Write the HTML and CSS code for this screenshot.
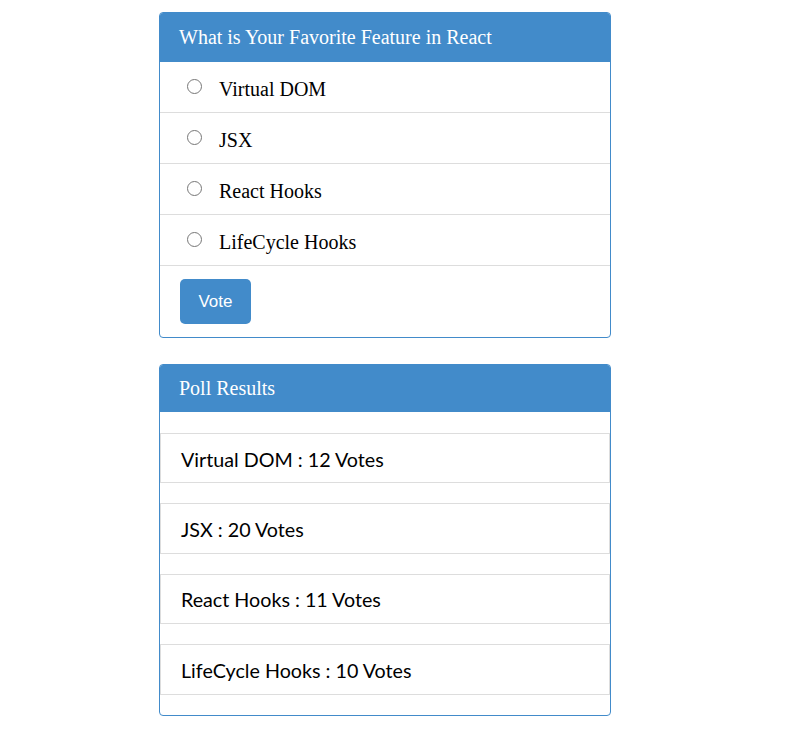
FILE: index.html
```html
<!DOCTYPE html>
<html>
<head>
<meta charset="utf-8">
<link rel="stylesheet" href="styles.css">
</head>
<body>
<div class="page">
  <div class="card">
    <div class="card-header">What is Your Favorite Feature in React</div>
    <label class="option"><input type="radio" name="f"><span>Virtual DOM</span></label>
    <label class="option"><input type="radio" name="f"><span>JSX</span></label>
    <label class="option"><input type="radio" name="f"><span>React Hooks</span></label>
    <label class="option"><input type="radio" name="f"><span>LifeCycle Hooks</span></label>
    <div class="card-footer"><button class="vote">Vote</button></div>
  </div>
  <div class="card results">
    <div class="card-header header-sm">Poll Results</div>
    <div class="result-list">
      <div class="result">Virtual DOM : 12 Votes</div>
      <div class="result">JSX : 20 Votes</div>
      <div class="result">React Hooks : 11 Votes</div>
      <div class="result">LifeCycle Hooks : 10 Votes</div>
    </div>
  </div>
</div>
</body>
</html>
```

FILE: styles.css
```css
html, body { margin: 0; padding: 0; background: #fff; }
.page {
  padding: 12px 0 0 159px;
  display: flex;
  flex-direction: column;
  gap: 26px;
}
.card {
  width: 450px;
  border: 1px solid #428bca;
  border-radius: 4px;
  overflow: hidden;
  background: #fff;
}
.card-header {
  background: #428bca;
  color: #fff;
  font-family: "Liberation Serif", serif;
  font-size: 20px;
  line-height: 23px;
  height: 49px;
  box-sizing: border-box;
  padding: 13px 19px 13px;
}
.header-sm {
  height: 47px;
  padding-top: 12px;
}
.option {
  display: flex;
  align-items: center;
  height: 51px;
  box-sizing: border-box;
  border-bottom: 1px solid #ddd;
  padding: 4px 0 0 27px;
  font-family: "Liberation Serif", serif;
  font-size: 20px;
  color: #000;
}
.option input {
  margin: 0 17px 0 0;
  width: 15px;
  height: 15px;
  position: relative;
  top: -3px;
}
.card-footer {
  padding: 13px 20px 13px;
}
.vote {
  display: block;
  background: #428bca;
  color: #fff;
  border: none;
  border-radius: 5px;
  width: 71px;
  height: 45px;
  font-family: "Liberation Sans", Arial, sans-serif;
  font-size: 17px;
  padding: 0;
}
.result-list {
  padding: 21px 0 20px;
  display: flex;
  flex-direction: column;
  gap: 20px;
}
.result {
  height: 50.4px;
  box-sizing: border-box;
  border: 1px solid #ddd;
  padding: 2px 0 0 20px;
  display: flex;
  align-items: center;
  font-family: Lato, sans-serif;
  font-size: 19.7px;
  color: #000;
}
```
